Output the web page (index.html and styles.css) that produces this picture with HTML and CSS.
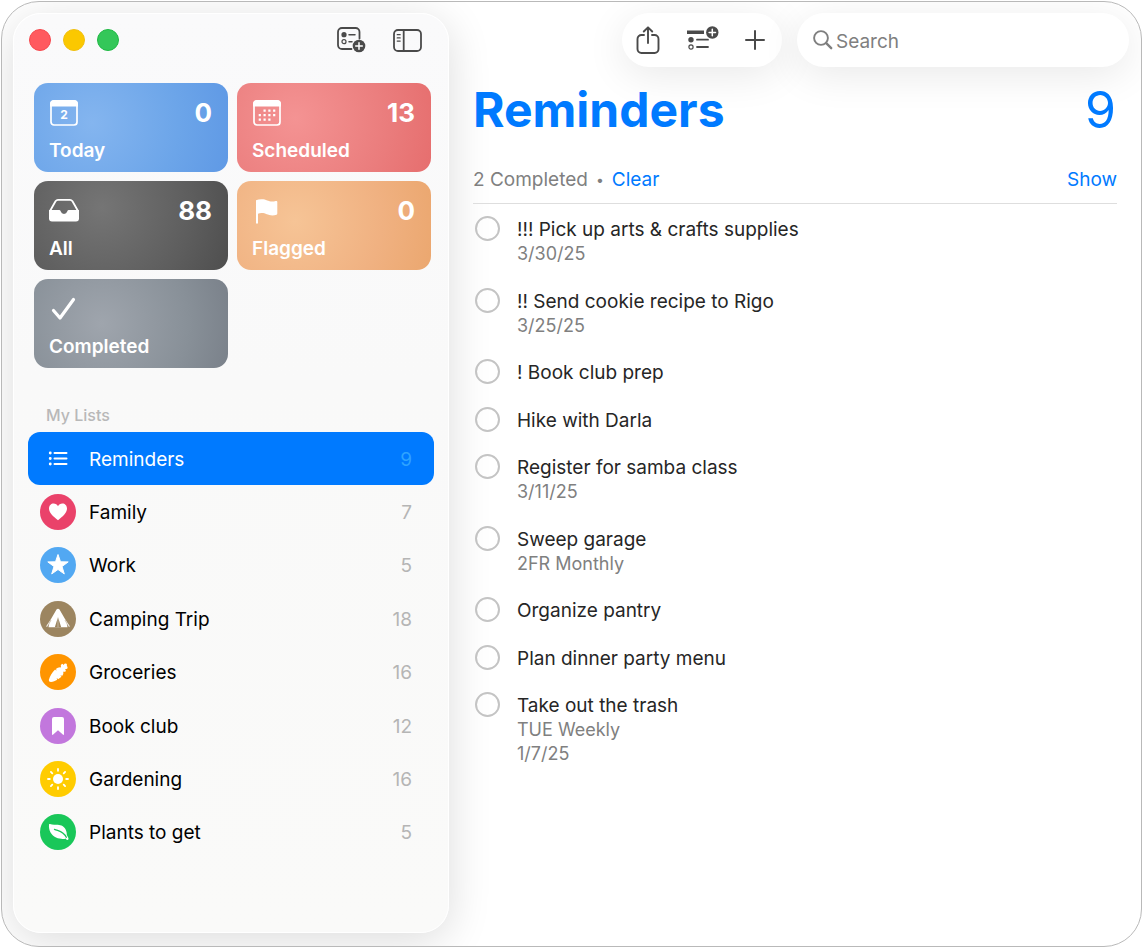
FILE: index.html
```html
<!DOCTYPE html>
<html lang="en">
<head>
  <meta charset="UTF-8">
  <title>Reminders</title>
  <link rel="stylesheet" href="styles.css">
</head>
<body>

<div class="window">

  <!-- Sidebar -->
  <aside class="sidebar">
    <div class="sidebar-bar">
      <div class="lights">
        <button class="light red" aria-label="Close"></button>
        <button class="light yellow" aria-label="Minimize"></button>
        <button class="light green" aria-label="Zoom"></button>
      </div>
      <div class="sidebar-tools">
        <button class="icon-btn" aria-label="Add list">
          <svg width="29" height="26" viewBox="0 0 29 26" fill="none" stroke="#4a4a4a" stroke-width="1.8" stroke-linecap="round">
            <path d="M14.5 22H5a4 4 0 0 1-4-4V5a4 4 0 0 1 4-4h13.500a4 4 0 0 1 4 4v6.500"/>
            <circle cx="7" cy="7.700" r="2.600" fill="#4a4a4a" stroke="none"/>
            <circle cx="7" cy="14.700" r="2" stroke-width="1.200"/>
            <path d="M12 7.700h6M12 14.700h3" stroke-width="1.500"/>
            <circle cx="22" cy="19" r="6.300" fill="#4a4a4a" stroke="none"/>
            <path d="M22 15.700v6.600M18.700 19h6.600" stroke="#fff" stroke-width="1.500"/>
          </svg>
        </button>
        <button class="icon-btn" aria-label="Toggle sidebar">
          <svg width="29" height="23" viewBox="0 0 29 23" fill="none" stroke="#4a4a4a" stroke-width="1.800" stroke-linecap="round">
            <rect x="1" y="1" width="27" height="21" rx="4"/>
            <path d="M10.700 1v21"/>
            <path d="M4.200 5.700h3M4.200 8.900h3M4.200 12.100h3" stroke-width="1.200"/>
          </svg>
        </button>
      </div>
    </div>

    <nav class="tiles" aria-label="Smart lists">
      <a href="#" class="tile today">
        <svg width="30" height="28" viewBox="0 0 30 28" fill="none">
          <rect x="2" y="2" width="26" height="24" rx="3" stroke="#fff" stroke-width="1.700"/>
          <path d="M1 7.500V5a4 4 0 0 1 4-4h20a4 4 0 0 1 4 4v2.500z" fill="#fff"/>
          <text x="15" y="20" class="day" text-anchor="middle">2</text>
        </svg>
        <span class="num">0</span>
        <span class="name">Today</span>
      </a>
      <a href="#" class="tile scheduled">
        <svg width="30" height="28" viewBox="0 0 30 28" fill="none">
          <rect x="2" y="2" width="26" height="24" rx="3" stroke="#fff" stroke-width="1.700"/>
          <path d="M1 7.500V5a4 4 0 0 1 4-4h20a4 4 0 0 1 4 4v2.500z" fill="#fff"/>
          <path d="M11.500 11.700h14M6.700 16.200h19M6.700 20.700h14" stroke="#fff" stroke-width="2.200" stroke-dasharray="2.200 2.600"/>
        </svg>
        <span class="num">13</span>
        <span class="name">Scheduled</span>
      </a>
      <a href="#" class="tile all">
        <svg width="30" height="28" viewBox="0 0 30 28" fill="none">
          <path d="M1 14 6.500 4.200Q7.500 2.800 9 2.800h12q1.500 0 2.500 1.400L29 14" stroke="#fff" stroke-width="1.800"/>
          <path d="M0 13h10.500q1 0 1.300 1.500a3.300 3.300 0 0 0 6.400 0Q18.500 13 19.500 13H30v8.500q0 3-3 3H3q-3 0-3-3z" fill="#fff"/>
        </svg>
        <span class="num">88</span>
        <span class="name">All</span>
      </a>
      <a href="#" class="tile flagged">
        <svg width="30" height="28" viewBox="0 0 30 28" fill="#fff">
          <path d="M4 3.200q2.300-1 5.500-1c5 0 6.500 2.300 11 2.300 2 0 3-.500 4-.500q.800 0 .800 1v11.500q0 1-.8 1.300-1.800.600-4 .600c-5 0-6.500-2.300-11-2.300q-2 0-3.500.600v9q0 1-1 1t-1-1z"/>
        </svg>
        <span class="num">0</span>
        <span class="name">Flagged</span>
      </a>
      <a href="#" class="tile completed">
        <svg width="30" height="28" viewBox="0 0 30 28" fill="none">
          <path d="M4.500 15.500 11 23 24.500 4.500" stroke="#fff" stroke-width="3.200" stroke-linecap="round" stroke-linejoin="round"/>
        </svg>
        <span class="name">Completed</span>
      </a>
    </nav>

    <h2>My Lists</h2>
    <nav class="lists" aria-label="My Lists">
      <a href="#" class="list active">
        <span class="badge">
          <svg width="36" height="36" viewBox="0 0 36 36" stroke="#fff" stroke-width="2" stroke-linecap="round">
            <path d="M14.500 12h12M14.500 17.500h12M14.500 23h12"/>
            <path d="M10.200 12h.1M10.200 17.500h.1M10.200 23h.1" stroke-width="2.800"/>
          </svg>
        </span>
        <span class="label">Reminders</span><span class="count">9</span>
      </a>
      <a href="#" class="list">
        <span class="badge pink">
          <svg width="36" height="36" viewBox="0 0 36 36" fill="#fff">
            <path d="M18 26.200C13 22.500 9 18.500 9 14.500 9 11.500 11.100 9.500 13.600 9.500c2 0 3.500 1.100 4.400 2.700.9-1.600 2.400-2.700 4.400-2.700 2.500 0 4.600 2 4.600 5 0 4-4 8-9 11.700z"/>
          </svg>
        </span>
        <span class="label">Family</span><span class="count">7</span>
      </a>
      <a href="#" class="list">
        <span class="badge blue">
          <svg width="36" height="36" viewBox="0 0 36 36" fill="#fff" stroke="#fff" stroke-linejoin="round">
            <path d="m18 7.500 2.500 7.300 7.700.1-6.200 4.600 2.300 7.400L18 22.500l-6.300 4.400 2.300-7.400-6.200-4.600 7.700-.1z"/>
          </svg>
        </span>
        <span class="label">Work</span><span class="count">5</span>
      </a>
      <a href="#" class="list">
        <span class="badge brown">
          <svg width="36" height="36" viewBox="0 0 36 36" fill="#fff">
            <path d="M16.500 8.500q1.500-1.300 3 0L25 18l4.800 7.300-.8.600-2.200-2.600.7 2.900h-19l.7-2.900L7 25.900l-.8-.6L11 18z"/>
            <path d="M18 16l-.8 10.200h-2.400zM18 16l.8 10.200h2.400zM17.400 26.200 18 18l.6 8.200z" fill="#9c8560"/>
            <path d="m11 19-3.500 6.500M25 19l3.500 6.500" stroke="#9c8560" stroke-width=".5"/>
          </svg>
        </span>
        <span class="label">Camping Trip</span><span class="count">18</span>
      </a>
      <a href="#" class="list">
        <span class="badge orange">
          <svg width="36" height="36" viewBox="0 0 36 36" fill="#fff">
            <path d="M8.800 26c1.200-4 3.400-7.600 6.300-10.500l1 .9.500-.5-.8-1q2.400-1.900 5.200-1.500-.9-2.600 1-3.600 1.200.2 1.600 1.200.9-1.700 2.900-1.300.8 1 .3 2.300 1.300.7.600 2.500-1.400.8-2.500.5 1.500.9.700 2.500-1.300.6-2.300.1.600 2.400-1.200 4.400l-1.100-.8-.5.500 1 1-3.400 2.500-1-.9-.5.500.7.900c-2 1.100-4.200 1.900-6.400 2.200q-2.300 0-2.100-1.900z"/>
          </svg>
        </span>
        <span class="label">Groceries</span><span class="count">16</span>
      </a>
      <a href="#" class="list">
        <span class="badge purple">
          <svg width="36" height="36" viewBox="0 0 36 36" fill="#fff">
            <path d="M12 11q0-2 2-2h8q2 0 2 2v15q0 1.500-1.200.5L18 22.300l-4.800 4.200Q12 27.500 12 26z"/>
          </svg>
        </span>
        <span class="label">Book club</span><span class="count">12</span>
      </a>
      <a href="#" class="list">
        <span class="badge yellow">
          <svg width="36" height="36" viewBox="0 0 36 36" stroke="#fff" stroke-width="1.800" stroke-linecap="round">
            <circle cx="18" cy="18" r="5" fill="#fff" stroke="none"/>
            <path d="M18 8v1.800M18 26.200V28M8 18h1.800M26.200 18H28M10.900 10.900l1.400 1.400M23.700 23.700l1.400 1.400M10.900 25.100l1.400-1.400M23.700 12.300l1.400-1.400"/>
          </svg>
        </span>
        <span class="label">Gardening</span><span class="count">16</span>
      </a>
      <a href="#" class="list">
        <span class="badge green">
          <svg width="36" height="36" viewBox="0 0 36 36" fill="#fff">
            <path d="M9 10.500q0-.8 1-.5c3.500 1.500 7.500-.300 11.500 1.500 3.800 1.800 5.500 6 5.300 9.500l1.700 3.200q.2 1.600-1 1.800-1 .2-1.700-1.600C24 25.200 20 25.200 16 23.500 11 21.200 8.500 16 9 10.500z"/>
            <path d="M14.500 15.300c4.500 1.900 9 1.700 11.800 8" fill="none" stroke="#19c759" stroke-width="1.300" stroke-linecap="round"/>
          </svg>
        </span>
        <span class="label">Plants to get</span><span class="count">5</span>
      </a>
    </nav>
  </aside>

  <!-- Open list -->
  <main class="content">
    <div class="toolbar">
      <div class="pill">
        <button class="icon-btn" aria-label="Share">
          <svg width="24" height="28" viewBox="0 0 24 28" fill="none" stroke="#4a4a4a" stroke-width="1.900" stroke-linecap="round" stroke-linejoin="round">
            <path d="M8 9H5.500A4 4 0 0 0 1.500 13v10a4 4 0 0 0 4 4h13a4 4 0 0 0 4-4V13a4 4 0 0 0-4-4H16"/>
            <path d="M12 17V1.500M7.800 5.500 12 1.300l4.200 4.200"/>
          </svg>
        </button>
        <button class="icon-btn" aria-label="Add section">
          <svg width="32" height="28" viewBox="0 0 32 28" fill="none" stroke="#4a4a4a" stroke-width="1.800" stroke-linecap="round">
            <path d="M0 6.300h17" stroke-width="3.600" stroke-linecap="butt"/>
            <circle cx="4" cy="13.700" r="2.700" fill="#4a4a4a" stroke="none"/>
            <circle cx="4" cy="21" r="2.100" stroke-width="1.200"/>
            <path d="M10 13.700h11M10 21h11"/>
            <circle cx="25.300" cy="6.500" r="6.200" fill="#4a4a4a" stroke="none"/>
            <path d="M25.300 3.300v6.400M22.100 6.500h6.400" stroke="#fff" stroke-width="1.500"/>
          </svg>
        </button>
        <button class="icon-btn" aria-label="Add reminder">
          <svg width="20" height="20" viewBox="0 0 20 20" fill="none" stroke="#4a4a4a" stroke-width="2" stroke-linecap="round">
            <path d="M10 1v18M1 10h18"/>
          </svg>
        </button>
      </div>
      <label class="search">
        <svg width="20" height="20" viewBox="0 0 20 20" fill="none" stroke="#7f7f7f" stroke-linecap="round">
          <circle cx="8" cy="8" r="6.900" stroke-width="1.900"/>
          <path d="m13.200 13.200 5 5" stroke-width="2.400"/>
        </svg>
        <input type="search" placeholder="Search" aria-label="Search">
      </label>
    </div>

    <header class="title">
      <h1>Reminders</h1>
      <span class="total">9</span>
    </header>

    <div class="summary">
      <span>2 Completed</span>
      <span class="dot">•</span>
      <a href="#">Clear</a>
      <a href="#" class="show">Show</a>
    </div>

    <ul class="reminders">
      <li>
        <input type="checkbox" id="r1">
        <div><label for="r1">!!! Pick up arts &amp; crafts supplies</label><p>3/30/25</p></div>
      </li>
      <li>
        <input type="checkbox" id="r2">
        <div><label for="r2">!! Send cookie recipe to Rigo</label><p>3/25/25</p></div>
      </li>
      <li>
        <input type="checkbox" id="r3">
        <div><label for="r3">! Book club prep</label></div>
      </li>
      <li>
        <input type="checkbox" id="r4">
        <div><label for="r4">Hike with Darla</label></div>
      </li>
      <li>
        <input type="checkbox" id="r5">
        <div><label for="r5">Register for samba class</label><p>3/11/25</p></div>
      </li>
      <li>
        <input type="checkbox" id="r6">
        <div><label for="r6">Sweep garage</label><p>2FR Monthly</p></div>
      </li>
      <li>
        <input type="checkbox" id="r7">
        <div><label for="r7">Organize pantry</label></div>
      </li>
      <li>
        <input type="checkbox" id="r8">
        <div><label for="r8">Plan dinner party menu</label></div>
      </li>
      <li>
        <input type="checkbox" id="r9">
        <div><label for="r9">Take out the trash</label><p>TUE Weekly</p><p>1/7/25</p></div>
      </li>
    </ul>
  </main>

</div>

</body>
</html>
```
FILE: styles.css
```css
* {
  box-sizing: border-box;
}
body {
  margin: 0;
  padding: 1px 2px 3px 1px;
  height: 100vh;
  background: #fff;
  font-family: Inter, "Liberation Sans", sans-serif;
  font-size: 19px;
  line-height: 24px;
  color: #262626;
}
a {
  color: #007aff;
  text-decoration: none;
}
button {
  border: none;
  padding: 0;
  background: none;
  cursor: pointer;
}
svg {
  display: block;
  flex: none;
}
.window {
  display: flex;
  min-height: 100%;
  padding: 11px 12px 13px 11px;
  border: 1px solid #b9b9b9;
  border-radius: 38px;
  overflow: hidden;
}

/* Sidebar */
.sidebar {
  flex: none;
  width: 436px;
  padding: 14px;
  border: 1px solid #fff;
  border-radius: 28px;
  background: linear-gradient(180deg, #fafafb, #f9f9f9 40%, #fafaf9);
  box-shadow: 0 8px 44px rgba(0, 0, 0, 0.14);
}
.sidebar-bar {
  display: flex;
  justify-content: space-between;
  align-items: center;
  height: 24px;
  padding: 0 12px 0 1px;
}
.lights {
  display: flex;
  gap: 12px;
}
.light {
  width: 22px;
  height: 22px;
  border-radius: 50%;
}
.light.red {
  background: #ff5a5f;
  border: 1px solid #f5494e;
}
.light.yellow {
  background: #fbc800;
  border: 1px solid #f0bf10;
}
.light.green {
  background: #34c759;
  border: 1px solid #1fb944;
}
.sidebar-tools {
  display: flex;
  align-items: center;
  gap: 27px;
}
.tiles {
  display: grid;
  grid-template-columns: 1fr 1fr;
  grid-auto-rows: 89px;
  gap: 9px;
  margin: 31px 3px 35px 6px;
}
.tile {
  display: grid;
  grid-template-columns: 1fr auto;
  align-content: space-between;
  padding: 16px 16px 9px 15px;
  border-radius: 14px;
  color: #fff;
}
.tile .num {
  font-size: 26px;
  line-height: 28px;
  font-weight: 700;
}
.tile .name {
  grid-column: 1 / -1;
  font-weight: 600;
}
.day {
  font-size: 12px;
  font-weight: 700;
  fill: #fff;
}
.today {
  background: radial-gradient(circle at 30% 45%, #84b5ef, #6ca5e9 60%, #5f99e5);
}
.scheduled {
  background: radial-gradient(circle at 30% 40%, #f49393, #ea7c7c 65%, #e66e6e);
}
.all {
  background: radial-gradient(circle at 35% 30%, #757575, #5d5d5d 65%, #4e4e4e);
}
.flagged {
  background: radial-gradient(circle at 30% 45%, #f6c496, #f0b181 60%, #eba76f);
}
.completed {
  background: radial-gradient(circle at 35% 50%, #9fa5ad, #889098 65%, #7a818a);
}
h2 {
  margin: 0 0 5px 18px;
  font-size: 16px;
  line-height: 24px;
  font-weight: 500;
  color: #b8b8b8;
}
.lists {
  display: flex;
  flex-direction: column;
  min-height: 427px;
}
.list {
  flex: 1;
  display: flex;
  align-items: center;
  gap: 13px;
  padding: 0 22px 0 12px;
  border-radius: 12px;
  color: #000;
}
.list .label, .list .count {
  padding-top: 2px;
}
.list .label {
  flex: 1;
}
.list .count {
  color: #b5b5b5;
}
.list.active {
  background: #007aff;
  color: #fff;
}
.list.active .count {
  color: #2ea3ff;
}
.badge {
  border-radius: 50%;
}
.badge.pink { background: #ea426a; }
.badge.blue { background: #52a8f2; }
.badge.brown { background: #9c8560; }
.badge.orange { background: #ff9500; }
.badge.purple { background: #c277dd; }
.badge.yellow { background: #ffcc00; }
.badge.green { background: #19c759; }

/* Open list */
.content {
  flex: 1;
  padding-left: 24px;
}
.toolbar {
  display: flex;
  justify-content: flex-end;
  gap: 15px;
}
.pill, .search {
  display: flex;
  align-items: center;
  height: 54px;
  border-radius: 27px;
  background: #fff;
  box-shadow: 0 8px 40px rgba(0, 0, 0, 0.09);
}
.pill {
  justify-content: space-between;
  width: 160px;
  padding: 0 17px 0 14px;
}
.search {
  gap: 3px;
  width: 332px;
  padding: 0 16px;
}
.search input {
  flex: 1;
  min-width: 0;
  padding: 3px 0 0;
  border: none;
  outline: none;
  background: none;
  font: inherit;
}
.search input::placeholder {
  color: #7f7f7f;
  opacity: 1;
}
.title {
  display: flex;
  justify-content: space-between;
  margin: 11px 13px 0 0;
  line-height: 64px;
  color: #007aff;
}
h1 {
  margin: 0;
  font-size: 48px;
  font-weight: 700;
}
.total {
  font-size: 50px;
}
.summary {
  display: flex;
  gap: 8px;
  margin: 26px 12px 0 0;
  padding-bottom: 11px;
  border-bottom: 1px solid #dedede;
  color: #808080;
}
.summary .dot {
  font-size: 14px;
}
.summary .show {
  margin-left: auto;
}
.reminders {
  display: flex;
  flex-direction: column;
  justify-content: space-between;
  min-height: 550px;
  margin: 12px 0 0;
  padding: 0 0 0 2px;
  list-style: none;
}
.reminders li {
  display: flex;
  gap: 17px;
}
.reminders div {
  padding-top: 2px;
}
.reminders input {
  appearance: none;
  flex: none;
  width: 25px;
  height: 25px;
  margin: 0;
  border: 2px solid #c4c4c4;
  border-radius: 50%;
}
.reminders input:checked {
  background: #007aff;
}
.reminders label {
  display: block;
}
.reminders p {
  margin: 0;
  font-size: 18px;
  color: #808080;
}
```
